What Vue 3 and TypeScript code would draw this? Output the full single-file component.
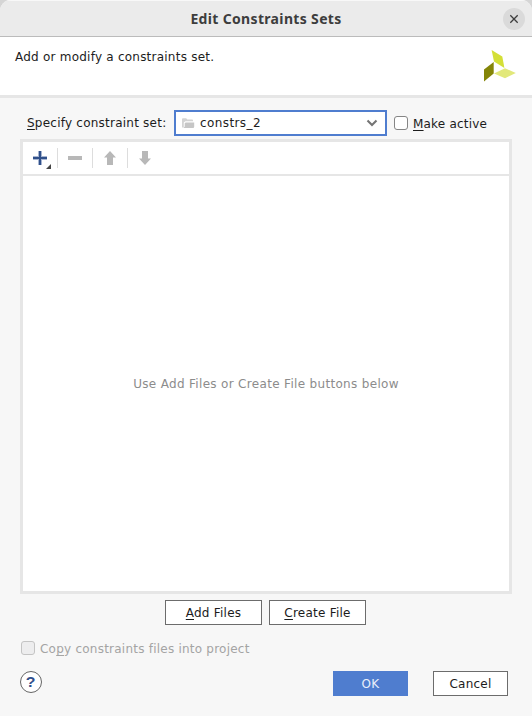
<script setup lang="ts">
import { ref } from 'vue'

const constraintSet = ref('constrs_2')
const makeActive = ref(false)
const copyFiles = ref(false)
</script>

<template>
  <div class="dialog">
    <header class="titlebar">
      <h1 class="title">Edit Constraints Sets</h1>
      <button class="close" aria-label="Close">
        <svg width="22" height="22" viewBox="0 0 22 22">
          <path d="M7.3 7.3 14.7 14.7M14.7 7.3 7.3 14.7" fill="none" stroke="#3d3d3d" stroke-width="1.3" />
        </svg>
      </button>
    </header>

    <section class="banner">
      <p class="description">Add or modify a constraints set.</p>
      <svg class="logo" width="32" height="32" viewBox="0 0 32 32">
        <polygon points="7.6,0 18.3,6.5 20.4,18 10,11.5" fill="#d4df37" />
        <polygon points="0,19.5 9.7,12 9.7,23.5 0,31.5" fill="#848508" />
        <polygon points="10,23.4 21,18.2 31.8,23 21,28.2" fill="#e2e87a" />
      </svg>
    </section>

    <main class="body">
      <div class="set-row">
        <label class="set-label"><span class="key">S</span>pecify constraint set:</label>
        <div class="combo" role="combobox" tabindex="0">
          <svg class="folder" width="13" height="11" viewBox="0 0 13 11">
            <path d="M0 9.5V1.2Q0 .3 1 .3H4.2L5.3 1.6H10.2Q11 1.6 11 2.5V3.3H3.4L1.8 4.4V9.5Z" fill="#d3d3d3" />
            <path d="M3.7 4.5H12.2V8.8Q12.2 10 11 10H1.6L2.7 8.6V5.3Z" fill="#c6c6c6" />
          </svg>
          <span class="combo-value">{{ constraintSet }}</span>
          <svg class="chevron" width="12" height="8" viewBox="0 0 12 8">
            <path d="M1.5 1.6 6 6 10.5 1.6" fill="none" stroke="#747474" stroke-width="2.1" />
          </svg>
        </div>
        <button class="check" role="checkbox" :aria-checked="makeActive" @click="makeActive = !makeActive">
          <span class="box"></span>
          <span class="active-text"><span class="key">M</span>ake active</span>
        </button>
      </div>

      <div class="panel">
        <div class="toolbar">
          <button class="tool add" aria-label="Add">
            <svg width="34" height="32" viewBox="0 0 34 32">
              <path d="M17 9v14M10 16h14" fill="none" stroke="#a8b6d2" stroke-width="4" />
              <path d="M17 9v14M10 16h14" fill="none" stroke="#30508a" stroke-width="2" />
              <polygon points="28,22 28,27 23,27" fill="#454545" />
            </svg>
          </button>
          <button class="tool" aria-label="Remove">
            <svg width="34" height="32" viewBox="0 0 34 32"><rect x="10" y="14" width="14" height="4" fill="#b8b8b8" /></svg>
          </button>
          <button class="tool" aria-label="Move up">
            <svg width="34" height="32" viewBox="0 0 34 32"><path d="M17 9 23 15.5H20V23H14V15.5H11Z" fill="#b8b8b8" /></svg>
          </button>
          <button class="tool" aria-label="Move down">
            <svg width="34" height="32" viewBox="0 0 34 32"><path d="M14 9H20V16.5H23L17 23 11 16.5H14Z" fill="#b8b8b8" /></svg>
          </button>
        </div>
        <div class="empty"><span class="empty-text">Use Add Files or Create File buttons below</span></div>
      </div>

      <div class="file-buttons">
        <button class="btn wide"><span class="add-text"><span class="key">A</span>dd Files</span></button>
        <button class="btn wide"><span class="create-text"><span class="key">C</span>reate File</span></button>
      </div>

      <button class="check copy" role="checkbox" :aria-checked="copyFiles" disabled>
        <span class="box"></span>
        <span class="copy-text">Co<span class="key">p</span>y constraints files into project</span>
      </button>

      <footer class="actions">
        <button class="help" aria-label="Help"><span class="mark">?</span></button>
        <button class="btn primary">OK</button>
        <button class="btn">Cancel</button>
      </footer>
    </main>
  </div>
</template>

<style>
body {
  background: #d5d5d5;
}
</style>

<style scoped>
* {
  box-sizing: border-box;
}
button {
  margin: 0;
  padding: 0;
  border: 0;
  background: none;
  font: inherit;
  color: inherit;
  letter-spacing: inherit;
}
svg {
  display: block;
}
.dialog {
  display: flex;
  flex-direction: column;
  width: 532px;
  height: 716px;
  overflow: hidden;
  border-radius: 11px 11px 0 0;
  background: #f7f7f7;
  color: #1c1c1c;
  font: 12px/16px "DejaVu Sans", sans-serif;
  letter-spacing: 0.23px;
  white-space: nowrap;
}
.titlebar {
  display: grid;
  flex-shrink: 0;
  grid-template-columns: 29px 1fr 22px;
  align-items: center;
  height: 37px;
  padding: 0 7px 0 0;
  border-top: 1px solid #f8f8f8;
  border-bottom: 1px solid #bbb;
  background: #ebebeb;
}
.title {
  grid-column: 2;
  margin: 0;
  color: #3d3d3d;
  font: bold 14px/18px "Noto Sans", sans-serif;
  letter-spacing: 0.34px;
  text-align: center;
}
.close {
  width: 22px;
  height: 22px;
  border-radius: 50%;
  background: #dadada;
}
.banner {
  display: flex;
  flex-shrink: 0;
  justify-content: space-between;
  align-items: flex-start;
  height: 61px;
  padding: 12px 16px 0 15px;
  border-bottom: 3px solid #e6e6e6;
  background: #fff;
}
.description {
  margin: 0;
}
.logo {
  margin-top: 1px;
}
.body {
  display: flex;
  flex-direction: column;
  flex: 1;
  padding: 12px 20px 20px;
}
.key {
  text-decoration: underline;
  text-decoration-thickness: 1px;
  text-underline-offset: 2px;
  text-decoration-skip-ink: none;
}
.set-row {
  display: flex;
  align-items: center;
  height: 26px;
  padding-left: 7px;
}
.set-label {
  width: 147px;
}
.combo {
  display: flex;
  align-items: center;
  width: 213px;
  height: 26px;
  padding: 0 7px 0 6px;
  border: 2px solid #4f7dcf;
  background: #fff;
}
.folder {
  margin-right: 5px;
}
.combo-value {
  flex: 1;
  letter-spacing: 0.4px;
}
.check {
  display: flex;
  align-items: center;
  gap: 5px;
  margin-left: 7px;
}
.active-text,
.copy-text {
  padding-top: 2px;
  line-height: 14px;
}
.active-text {
  letter-spacing: 0.2px;
}
.box {
  width: 14px;
  height: 14px;
  border: 1px solid #858585;
  border-radius: 3px;
  background: #fff;
}
.panel {
  display: flex;
  flex-direction: column;
  width: 492px;
  height: 455px;
  margin-top: 3px;
  border: 3px solid #e6e6e6;
  background: #fff;
}
.toolbar {
  display: flex;
  align-items: center;
  height: 34px;
  border-bottom: 2px solid #e6e6e6;
}
.tool + .tool::before {
  content: "";
  width: 1px;
  height: 20px;
  background: #ddd;
}
.tool {
  display: flex;
  align-items: center;
}
.empty {
  display: flex;
  flex: 1;
  align-items: center;
  justify-content: center;
  color: #8c8c8c;
  letter-spacing: 0.32px;
}
.file-buttons {
  display: flex;
  gap: 7px;
  margin: 6px 0 0 145px;
}
.btn {
  width: 75px;
  height: 25px;
  border: 1px solid #6c6c6c;
  background: #fff;
}
.wide {
  width: 97px;
}
.copy {
  align-self: flex-start;
  margin: 15px 0 0 1px;
  color: #a4a4a4;
}
.copy .box {
  border-color: #c4c4c4;
  background: #ededee;
}
.actions {
  display: flex;
  align-items: flex-start;
  gap: 25px;
  margin-top: 15px;
}
.help {
  display: flex;
  justify-content: center;
  width: 22px;
  height: 22px;
  margin-right: auto;
  border: 1px solid #666;
  border-radius: 50%;
  background: #fff;
  color: #304f8c;
  font: bold 15px/20px "Liberation Sans", sans-serif;
  letter-spacing: 0;
}
.mark {
  transform: scaleX(1.06);
}
.primary {
  border-color: #4f7dcf;
  background: #4f7dcf;
  color: #e9effa;
}
.actions .btn:last-child {
  margin-right: 4px;
}
</style>
